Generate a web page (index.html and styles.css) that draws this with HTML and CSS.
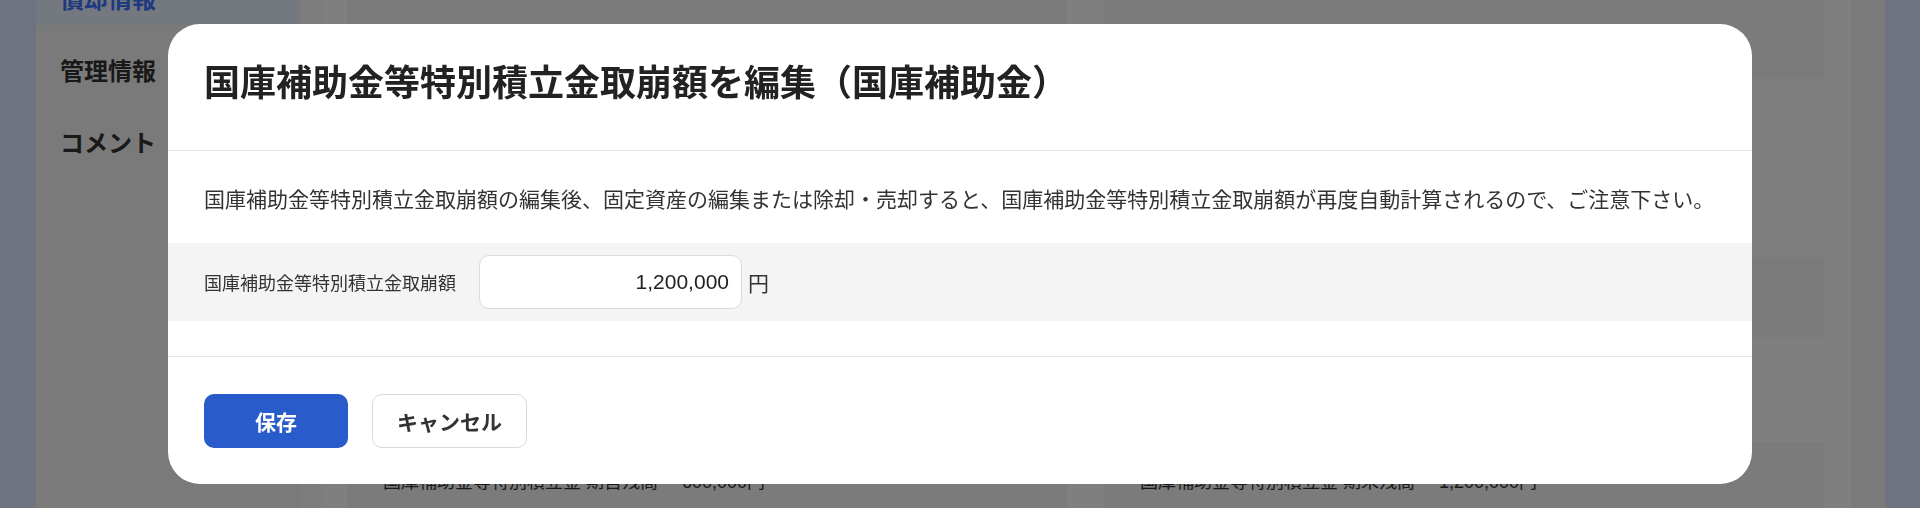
FILE: index.html
```html
<!DOCTYPE html>
<html lang="ja">
<head>
<meta charset="utf-8">
<title>国庫補助金等特別積立金取崩額を編集</title>
<link rel="stylesheet" href="styles.css">
</head>
<body>
<div class="app">
  <nav class="rail"></nav>
  <aside class="side">
    <ul class="side-list">
      <li class="side-item active">償却情報</li>
      <li class="side-item">管理情報</li>
      <li class="side-item">コメント</li>
    </ul>
  </aside>
  <main class="main">
    <div class="main-edge"></div>
    <div class="cards">
      <section class="card">
        <div class="crow gray r1"></div>
        <div class="crow r2"></div>
        <div class="crow gray r3"></div>
        <div class="crow r4"></div>
        <div class="crow gray r5"><span class="ck">国庫補助金等特別積立金 期首残高</span><span class="cv">600,000円</span></div>
      </section>
      <section class="card">
        <div class="crow gray r1"></div>
        <div class="crow r2"></div>
        <div class="crow gray r3"></div>
        <div class="crow r4"></div>
        <div class="crow gray r5"><span class="ck">国庫補助金等特別積立金 期末残高</span><span class="cv">1,200,000円</span></div>
      </section>
    </div>
    <div class="right-gap"></div>
    <div class="right-panel"></div>
    <div class="right-rail"></div>
  </main>
</div>

<div class="overlay">
  <div class="modal" role="dialog">
    <header class="modal-header">
      <h2 class="modal-title">国庫補助金等特別積立金取崩額を編集（国庫補助金）</h2>
    </header>
    <div class="modal-body">
      <p class="notice">国庫補助金等特別積立金取崩額の編集後、固定資産の編集または除却・売却すると、国庫補助金等特別積立金取崩額が再度自動計算されるので、ご注意下さい。</p>
      <div class="field-row">
        <label class="field-label">国庫補助金等特別積立金取崩額</label>
        <input class="field-input" type="text" value="1,200,000" readonly>
        <span class="unit">円</span>
      </div>
    </div>
    <footer class="modal-footer">
      <button class="btn btn-primary">保存</button>
      <button class="btn btn-secondary">キャンセル</button>
    </footer>
  </div>
</div>
</body>
</html>
```

FILE: styles.css
```css
html, body {
  margin: 0;
  padding: 0;
  height: 508px;
  overflow: hidden;
}

body {
  font-family: "Liberation Sans", "Noto Sans CJK JP", sans-serif;
  color: #333;
  background: #fff;
}

.app {
  display: flex;
  height: 508px;
}

.rail {
  width: 36px;
  flex: none;
  background: #dee6fe;
}

.side {
  width: 264px;
  flex: none;
  background: #f4f4f4;
}

.side-list {
  list-style: none;
  margin: -25px 0 0;
  padding: 0;
  display: flex;
  flex-direction: column;
  gap: 22px;
}

.side-item {
  height: 50px;
  line-height: 50px;
  padding-left: 24px;
  font-size: 24px;
  font-weight: 700;
  color: #333;
}

.side-item.active {
  background: #e9f0fe;
  color: #3d72ff;
}

.main {
  flex: 1;
  display: flex;
  background: #fff;
}

.main-edge {
  width: 23px;
  flex: none;
  background: #fafafa;
  margin-right: 24px;
}

.cards {
  display: flex;
  gap: 37px;
}

.card {
  width: 720px;
  display: flex;
  flex-direction: column;
  background: #fff;
}

.crow { flex: none; }
.crow.gray { background: #f6f6f6; }
.r1 { height: 79px; }
.r2 { height: 178px; }
.r3 { height: 82px; }
.r4 { height: 103px; }
.r5 {
  height: 66px;
  box-sizing: border-box;
  padding: 28px 0 0 36px;
  display: flex;
  font-size: 18px;
  line-height: 24px;
  color: #333;
}

.ck { width: 299px; }

.right-gap { width: 27px; flex: none; }
.right-panel { width: 34px; flex: none; background: #f6f6f6; }
.right-rail { width: 35px; flex: none; background: #dee6fe; }

/* overlay + modal */
.overlay {
  position: fixed;
  inset: 0;
  background: rgba(0, 0, 0, 0.5);
  display: flex;
  align-items: center;
  justify-content: center;
}

.modal {
  width: 1584px;
  background: #fff;
  border-radius: 32px;
  overflow: hidden;
}

.modal-header {
  padding: 35px 36px 41px;
  border-bottom: 1px solid #e6e6e6;
}

.modal-title {
  margin: 0;
  font-size: 36px;
  line-height: 50px;
  font-weight: 700;
  color: #222;
}

.modal-body {
  padding: 33px 0 35px;
  border-bottom: 1px solid #e6e6e6;
}

.notice {
  margin: 0 36px 27px;
  font-size: 21px;
  line-height: 32px;
  color: #333;
}

.field-row {
  background: #f5f4f5;
  padding: 12px 36px;
  display: flex;
  align-items: center;
}

.field-label {
  font-size: 18px;
  color: #333;
  margin-right: 23px;
}

.field-input {
  width: 263px;
  height: 54px;
  box-sizing: border-box;
  border: 1px solid #dcdcdc;
  border-radius: 10px;
  background: #fff;
  padding: 0 12px;
  text-align: right;
  font-family: "Liberation Sans", "Noto Sans CJK JP", sans-serif;
  font-size: 21px;
  color: #222;
  outline: none;
}

.unit {
  margin-left: 6px;
  font-size: 21px;
  color: #333;
}

.modal-footer {
  padding: 37px 36px 36px;
  display: flex;
  gap: 24px;
}

.btn {
  height: 54px;
  box-sizing: border-box;
  border-radius: 10px;
  font-family: "Liberation Sans", "Noto Sans CJK JP", sans-serif;
  font-size: 21px;
  font-weight: 700;
  cursor: pointer;
}

.btn-primary {
  width: 144px;
  background: #295bca;
  color: #fff;
  border: none;
}

.btn-secondary {
  width: 155px;
  background: #fff;
  color: #333;
  border: 1px solid #d9d9d9;
}
```
